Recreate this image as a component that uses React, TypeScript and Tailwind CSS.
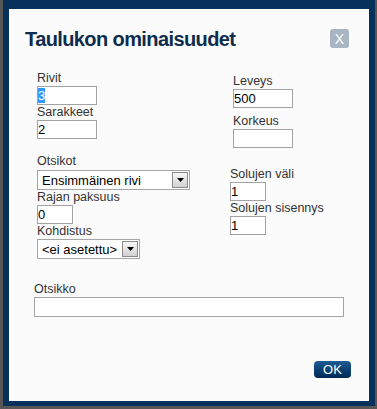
import React from 'react'

function Label({ children }: { children: React.ReactNode }) {
  return <div className="text-[12.5px] leading-[15px] text-[#333]">{children}</div>
}

function Field({ children, width }: { children?: React.ReactNode; width: string }) {
  return (
    <div
      className={`${width} h-[19px] border border-[#a3a3a3] bg-white text-[13px] leading-[17px] text-black whitespace-nowrap`}
    >
      {children}
    </div>
  )
}

function Select({ value, width }: { value: string; width: string }) {
  return (
    <div className={`${width} h-[20px] border border-[#a6a6a6] bg-white flex items-center`}>
      <span className="flex-1 pl-[4px] text-[13px] leading-none text-black whitespace-nowrap">{value}</span>
      <span className="w-[16px] h-[16px] mr-[1px] border border-[#8a8a8a] bg-gradient-to-b from-[#f6f6f6] to-[#d2d2d2] flex items-center justify-center">
        <svg width="7" height="4" viewBox="0 0 7 4">
          <path d="M0 0h7L3.5 4z" fill="#000" />
        </svg>
      </span>
    </div>
  )
}

export default function App() {
  return (
    <div className="w-[377px] h-[409px] bg-[#575757] pl-[3px] pr-[2px] pb-[3px] font-['Liberation_Sans',Arial,sans-serif]">
      <div className="h-full border-[#07305a] border-x-[6px] border-t-[9px] border-b-[5px] bg-[#fbfbfb] flex flex-col">
        {/* Header */}
        <div className="flex items-start justify-between pt-[20px] pl-[16px] pr-[20px]">
          <h1 className="text-[20px] leading-[20px] font-bold tracking-[-0.6px] text-[#0e2c4d]">
            Taulukon ominaisuudet
          </h1>
          <div className="w-[19px] h-[19px] rounded-[3px] bg-[#a8b6c4] text-white flex items-center justify-center text-[14px] leading-none">
            X
          </div>
        </div>

        {/* Rows / size */}
        <div className="mt-[22px] flex items-start">
          <div className="ml-[28px] w-[196px]">
            <Label>Rivit</Label>
            <Field width="w-[60px]">
              <span className="bg-[#3399ff] text-white">3</span>
            </Field>
            <Label>Sarakkeet</Label>
            <Field width="w-[60px]">2</Field>
          </div>
          <div className="pt-[3px]">
            <Label>Leveys</Label>
            <Field width="w-[60px]">500</Field>
            <div className="mt-[6px]">
              <Label>Korkeus</Label>
            </div>
            <Field width="w-[60px]" />
          </div>
        </div>

        {/* Headers / spacing */}
        <div className="mt-[6px] flex items-start">
          <div className="ml-[28px] w-[193px]">
            <Label>Otsikot</Label>
            <div className="mt-[1px]">
              <Select value="Ensimmäinen rivi" width="w-[153px]" />
            </div>
            <Label>Rajan paksuus</Label>
            <Field width="w-[36px]">0</Field>
            <Label>Kohdistus</Label>
            <Select value="<ei asetettu>" width="w-[103px]" />
          </div>
          <div className="pt-[13px]">
            <Label>Solujen väli</Label>
            <Field width="w-[36px]">1</Field>
            <Label>Solujen sisennys</Label>
            <Field width="w-[36px]">1</Field>
          </div>
        </div>

        {/* Caption */}
        <div className="mt-[23px] ml-[25px]">
          <Label>Otsikko</Label>
          <div className="w-[310px] h-[20px] border border-[#a3a3a3] bg-white" />
        </div>

        <div className="mt-[44px] flex justify-end pr-[18px]">
          <div className="w-[37px] h-[17px] rounded-[4px] bg-gradient-to-b from-[#1d5a94] to-[#002a56] text-white text-[13px] leading-none flex items-center justify-center">
            OK
          </div>
        </div>
      </div>
    </div>
  )
}
